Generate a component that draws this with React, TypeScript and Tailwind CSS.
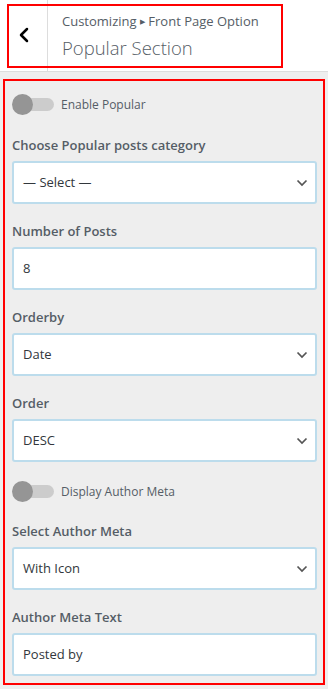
import { ChevronLeft } from "lucide-react";

const font = { fontFamily: '"Open Sans", "Noto Sans", sans-serif' };

const fieldBox =
  "flex h-[43px] w-full items-center rounded-[3px] border-2 border-[#bcdcec] bg-white pl-[9px] pr-[7px] text-[13px] text-[#32373c]";

function Caret() {
  return (
    <svg width="12" height="8" viewBox="0 0 12 8" className="text-[#555]">
      <path d="M1.5 1.5 L6 6 L10.5 1.5" fill="none" stroke="currentColor" strokeWidth="1.7" />
    </svg>
  );
}

function Toggle({ label }: { label: string }) {
  return (
    <div className="flex items-center">
      <div className="relative h-[21px] w-[42px]">
        <div className="absolute left-[10px] right-0 top-[4px] h-[13px] rounded-full bg-[#cccccc]" />
        <div className="absolute left-0 top-0 size-[21px] rounded-full bg-[#959595]" />
      </div>
      <span className="ml-[7px] text-[12px] text-[#555d66]">{label}</span>
    </div>
  );
}

function Field({
  label,
  value,
  select = false,
}: {
  label: string;
  value: string;
  select?: boolean;
}) {
  return (
    <div className="flex flex-col">
      <div className="mb-[6px] text-[13px] font-semibold leading-[20px] text-[#555d66]">
        {label}
      </div>
      <div className={fieldBox}>
        <span className="flex-1">{value}</span>
        {select ? <Caret /> : null}
      </div>
    </div>
  );
}

export default function App() {
  return (
    <div style={font} className="min-h-[689px] w-[328px] bg-[#eeeeee]">
      <header className="relative flex h-[72px] border-b border-[#dddddd] bg-white">
        <div className="flex w-[48px] items-center justify-center border-r border-[#dddddd] pb-[2px]">
          <ChevronLeft size={24} strokeWidth={2.5} className="text-black" />
        </div>
        <div className="flex flex-col pl-[14px] pt-[11px]">
          <div className="text-[13px] leading-[20px] text-[#555d66]">
            Customizing <span className="text-[7px] align-[2px]">▶</span>{" "}
            Front Page Option
          </div>
          <div className="mt-[3px] text-[18.5px] font-light leading-[26px] text-[#555d66]">
            Popular Section
          </div>
        </div>
        <div className="pointer-events-none absolute left-[7px] top-[4px] h-[64px] w-[276px] border-2 border-[#ff0000]" />
      </header>

      <main className="mx-[3px] mt-[7px] border-2 border-[#ff0000] pb-[7px] pl-[7px] pr-[6px] pt-[13px]">
        <Toggle label="Enable Popular" />
        <div className="mt-[20px] flex flex-col gap-[17px]">
          <Field label="Choose Popular posts category" value="— Select —" select />
          <Field label="Number of Posts" value="8" />
          <Field label="Orderby" value="Date" select />
          <Field label="Order" value="DESC" select />
        </div>
        <div className="mt-[19px]">
          <Toggle label="Display Author Meta" />
        </div>
        <div className="mt-[19px] flex flex-col gap-[17px]">
          <Field label="Select Author Meta" value="With Icon" select />
          <Field label="Author Meta Text" value="Posted by" />
        </div>
      </main>
    </div>
  );
}
